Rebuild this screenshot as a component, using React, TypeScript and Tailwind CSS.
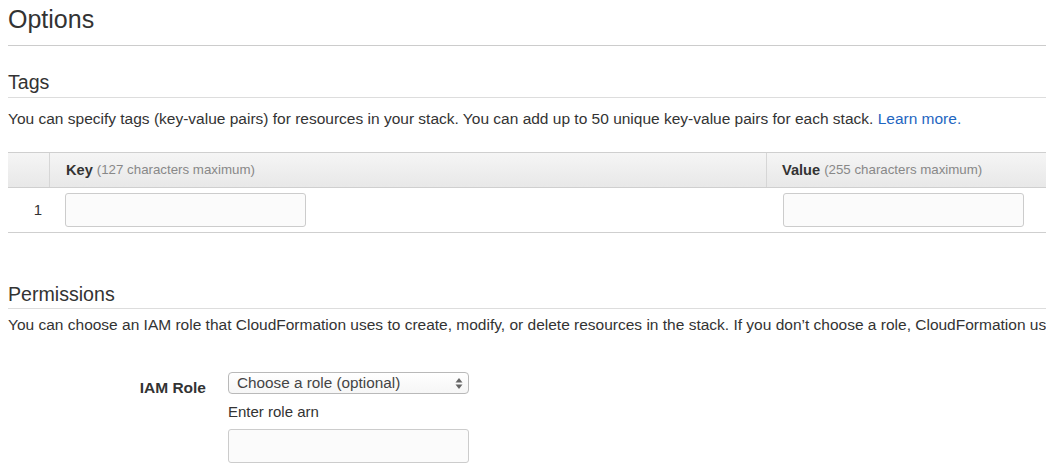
export default function App() {
  return (
    <div className="w-[1046px] h-[475px] overflow-hidden bg-white font-['Liberation_Sans',Arial,sans-serif] text-[#333]">
      <div className="w-[1200px] pl-2">
        <h1 className="pt-[6px] pb-[13px] text-[25px] leading-[26px] font-normal text-[#333] border-b border-[#cccccc]">
          Options
        </h1>

        <h2 className="mt-[26px] pb-[5px] text-[19.6px] leading-[20px] font-normal text-[#333] border-b border-[#dddddd]">
          Tags
        </h2>
        <p className="mt-[11px] text-[15.5px] leading-[20px]">
          You can specify tags (key-value pairs) for resources in your stack. You can add up to 50 unique key-value pairs for each stack.{" "}
          <a className="text-[#1f66c1]">Learn more.</a>
        </p>

        <div className="mt-[23px] w-[1038px]">
          <div className="flex h-[36px] border-y border-[#cfcfcf] bg-gradient-to-b from-[#f5f5f5] to-[#e8e8e8]">
            <div className="w-[42px] border-r border-[#d6d6d6]" />
            <div className="w-[717px] border-r border-[#d6d6d6] pl-[16px] flex items-center leading-[20px]">
              <span className="text-[14.6px] font-bold text-[#333]">Key</span>
              <span className="ml-[4px] text-[13.3px] text-[#888]">(127 characters maximum)</span>
            </div>
            <div className="flex-1 pl-[15px] flex items-center leading-[20px]">
              <span className="text-[14.6px] font-bold text-[#333]">Value</span>
              <span className="ml-[4px] text-[13.3px] text-[#888]">(255 characters maximum)</span>
            </div>
          </div>
          <div className="flex h-[45px] items-center border-b border-[#cfcfcf]">
            <div className="w-[42px] pr-[8px] text-right text-[15px] leading-[20px]">1</div>
            <div className="w-[717px] pl-[15px]">
              <div className="w-[241px] h-[34px] rounded-[3px] border border-[#cccccc] bg-[#fbfbfb]" />
            </div>
            <div className="flex-1 pl-[16px]">
              <div className="w-[241px] h-[34px] rounded-[3px] border border-[#cccccc] bg-[#fbfbfb]" />
            </div>
          </div>
        </div>

        <h2 className="mt-[51px] pb-[4px] text-[19.6px] leading-[20px] font-normal text-[#333] border-b border-[#dddddd]">
          Permissions
        </h2>
        <p className="mt-[6px] text-[15.5px] leading-[20px] whitespace-nowrap">
          You can choose an IAM role that CloudFormation uses to create, modify, or delete resources in the stack. If you don’t choose a role, CloudFormation uses the permissions defined in your account.
        </p>

        <div className="mt-[37px] flex">
          <div className="w-[198px] pt-[6px] text-right text-[15.5px] leading-[20px] font-bold text-[#333]">IAM Role</div>
          <div className="ml-[22px]">
            <div className="relative w-[241px] h-[22px] rounded-[4px] border border-[#b9b9b9] bg-gradient-to-b from-white to-[#f6f6f6] pl-[8px] text-[15.3px] leading-[20px] text-[#444]">
              Choose a role (optional)
              <svg className="absolute right-[5px] top-[4px]" width="8" height="13" viewBox="0 0 8 13">
                <path d="M4 1 L7.5 5.5 L0.5 5.5 Z" fill="#666" />
                <path d="M4 12 L7.5 7.5 L0.5 7.5 Z" fill="#666" />
              </svg>
            </div>
            <div className="mt-[8px] text-[15px] leading-[20px]">Enter role arn</div>
            <div className="mt-[7px] w-[241px] h-[34px] rounded-[3px] border border-[#cccccc] bg-[#fbfbfb]" />
          </div>
        </div>
      </div>
    </div>
  );
}
